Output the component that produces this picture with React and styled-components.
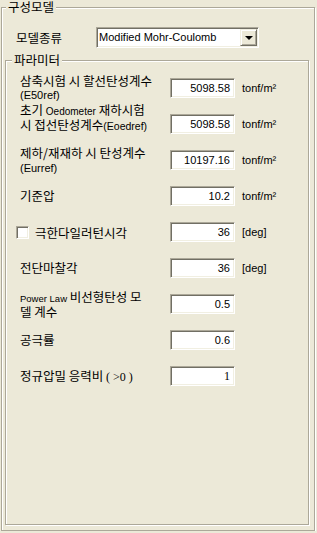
import React from 'react';
import styled, {createGlobalStyle} from 'styled-components';

const Global = createGlobalStyle`
  body {
    margin: 0;
    background: #ece9d8;
    font-family: "Noto Sans CJK KR", sans-serif;
    color: #000;
  }
`;

const S = {};

const sunken = `
  border: 1px solid;
  border-color: #aca899 #fff #fff #aca899;
  box-shadow: inset 1px 1px #716f64, inset -1px -1px #f1efe2;
`;

S.Outer = styled.fieldset`
  box-sizing: border-box;
  margin: 0 0 0 1px;
  padding: 0;
  width: 314px;
  height: 531px;
  border: 1px solid #aca899;
  box-shadow: inset 1px 1px #fff, 1px 1px #fff;
  min-width: 0;
`;

S.Inner = styled.fieldset`
  box-sizing: border-box;
  margin: 6px 0 0 3px;
  padding: 0;
  width: 304px;
  height: 472px;
  border: 1px solid #aca899;
  box-shadow: inset 1px 1px #fff, 1px 1px #fff;
  min-width: 0;
`;

S.Legend = styled.legend`
  margin-left: ${p => p.$inner ? 6 : 4}px;
  padding: 0 2px;
  font-size: 12.5px;
  line-height: 14px;
  background: #ece9d8;
`;

S.ModelRow = styled.div`
  display: flex;
  align-items: center;
  margin-top: 13px;
  height: 20px;
`;

S.ModelLabel = styled.div`
  width: 80px;
  padding-left: 14px;
  font-size: 12.5px;
`;

S.Combo = styled.div`
  box-sizing: border-box;
  display: flex;
  align-items: center;
  width: 163px;
  height: 21px;
  background: #fff;
  ${sunken}
`;

S.ComboText = styled.div`
  flex: 1;
  padding-left: 2px;
  font-family: "Liberation Sans", sans-serif;
  font-size: 11px;
`;

S.ComboButton = styled.div`
  box-sizing: border-box;
  display: flex;
  align-items: center;
  justify-content: center;
  width: 17px;
  height: 17px;
  margin-right: 1px;
  background: #ece9d8;
  border: 1px solid;
  border-color: #f1efe2 #716f64 #716f64 #f1efe2;
  box-shadow: inset 1px 1px #fff, inset -1px -1px #aca899;
`;

S.Arrow = styled.span`
  width: 0;
  height: 0;
  margin-top: 1px;
  border-left: 4px solid transparent;
  border-right: 4px solid transparent;
  border-top: 4px solid #000;
`;

S.Rows = styled.div`
  padding: 3px 0 0 14px;
`;

S.Row = styled.div`
  display: grid;
  grid-template-columns: 143px 65px auto;
  grid-template-rows: 36px;
  column-gap: 7px;
  align-items: center;
  height: 36px;
`;

S.Label = styled.div`
  font-size: 12.5px;
  line-height: ${p => p.$tight ? 13 : 14}px;
  white-space: nowrap;
  ${p => p.$lift && 'align-self: start; margin-top: -3px;'}
`;

S.Latin = styled.span`
  font-family: "Liberation Sans", sans-serif;
  font-size: ${p => p.$size || 11}px;
`;

S.Serif = styled.span`
  font-family: "Liberation Serif", serif;
  font-size: 12px;
`;

S.CheckLabel = styled.div`
  display: flex;
  align-items: center;
  gap: 6px;
  margin-left: -4px;
  font-size: 12.5px;
`;

S.Check = styled.span`
  box-sizing: border-box;
  width: 13px;
  height: 13px;
  background: #fff;
  ${sunken}
`;

S.Input = styled.div`
  box-sizing: border-box;
  height: 20px;
  padding: 0 4px;
  text-align: right;
  line-height: 18px;
  background: #fff;
  font-family: ${p => p.$serif ? '"Liberation Serif", serif' : '"Liberation Sans", sans-serif'};
  font-size: ${p => p.$serif ? 12 : 11}px;
  ${sunken}
`;

S.Unit = styled.div`
  font-family: "Liberation Sans", sans-serif;
  font-size: 11px;
`;

const rows = [
  {
    label: <>삼축시험 시 할선탄성계수<br/><S.Latin>(E50ref)</S.Latin></>,
    value: '5098.58',
    unit: 'tonf/m²',
    tight: true,
  },
  {
    label: <>초기 <S.Latin $size={10}>Oedometer</S.Latin> 재하시험<br/>시 접선탄성계수<S.Latin $size={10.5}>(Eoedref)</S.Latin></>,
    value: '5098.58',
    unit: 'tonf/m²',
    lift: true,
  },
  {
    label: <>제하/재재하 시 탄성계수<br/><S.Latin>(Eurref)</S.Latin></>,
    value: '10197.16',
    unit: 'tonf/m²',
  },
  {label: '기준압', value: '10.2', unit: 'tonf/m²'},
  {label: '극한다일러턴시각', value: '36', unit: '[deg]', check: true},
  {label: '전단마찰각', value: '36', unit: '[deg]'},
  {
    label: <><S.Latin $size={9.5}>Power Law</S.Latin> 비선형탄성 모<br/>델 계수</>,
    value: '0.5',
    tight: true,
  },
  {label: '공극률', value: '0.6'},
  {
    label: <>정규압밀 응력비 <S.Serif>( &gt;0 )</S.Serif></>,
    value: '1',
    serif: true,
  },
];

const App = () => {
  return (
    <>
      <Global/>
      <S.Outer>
        <S.Legend>구성모델</S.Legend>
        <S.ModelRow>
          <S.ModelLabel>모델종류</S.ModelLabel>
          <S.Combo>
            <S.ComboText>Modified Mohr-Coulomb</S.ComboText>
            <S.ComboButton>
              <S.Arrow/>
            </S.ComboButton>
          </S.Combo>
        </S.ModelRow>
        <S.Inner>
          <S.Legend $inner>파라미터</S.Legend>
          <S.Rows>
            {rows.map((r, i) => (
              <S.Row key={i}>
                {r.check ? (
                  <S.CheckLabel>
                    <S.Check/>
                    {r.label}
                  </S.CheckLabel>
                ) : (
                  <S.Label $tight={r.tight || r.lift} $lift={r.lift}>{r.label}</S.Label>
                )}
                <S.Input $serif={r.serif}>{r.value}</S.Input>
                {r.unit && <S.Unit>{r.unit}</S.Unit>}
              </S.Row>
            ))}
          </S.Rows>
        </S.Inner>
      </S.Outer>
    </>
  );
};

export default App;
